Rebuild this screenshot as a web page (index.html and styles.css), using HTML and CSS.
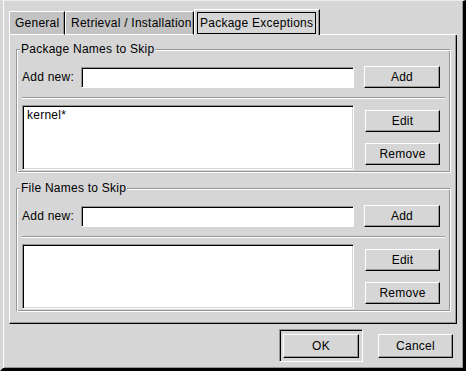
FILE: index.html
```html
<!DOCTYPE html>
<html lang="en">
<head>
    <meta charset="UTF-8">
    <title>Package Exceptions</title>
    <link rel="stylesheet" href="styles.css">
</head>
<body>

    <div class="window">
        <div class="notebook">
            <div class="tabs">
                <div class="tab tab-general">General</div>
                <div class="tab tab-retrieval">Retrieval / Installation</div>
                <div class="tab tab-exceptions active"><span class="focus">Package Exceptions</span></div>
                <div class="tab-fill"></div>
            </div>

            <div class="page">
                <fieldset class="frame">
                    <legend>Package Names to Skip</legend>
                    <div class="add-row">
                        <label>Add new:</label>
                        <div class="entry"></div>
                        <button class="btn">Add</button>
                    </div>
                    <div class="separator"></div>
                    <div class="list-row">
                        <div class="list">
                            <div class="item">kernel*</div>
                        </div>
                        <div class="list-buttons">
                            <button class="btn">Edit</button>
                            <button class="btn">Remove</button>
                        </div>
                    </div>
                </fieldset>

                <fieldset class="frame">
                    <legend>File Names to Skip</legend>
                    <div class="add-row">
                        <label>Add new:</label>
                        <div class="entry"></div>
                        <button class="btn">Add</button>
                    </div>
                    <div class="separator"></div>
                    <div class="list-row">
                        <div class="list"></div>
                        <div class="list-buttons">
                            <button class="btn">Edit</button>
                            <button class="btn">Remove</button>
                        </div>
                    </div>
                </fieldset>
            </div>
        </div>

        <div class="actions">
            <div class="default-frame">
                <button class="btn dialog-btn">OK</button>
            </div>
            <button class="btn dialog-btn cancel">Cancel</button>
        </div>
    </div>

</body>
</html>
```

FILE: styles.css
```css
body {
    margin: 0;
    background-color: #d6d6d6;
    color: #000;
    font-family: 'Liberation Sans', Arial, sans-serif;
    font-size: 12px;
    letter-spacing: 0.25px;
}

.window {
    width: 466px;
    height: 371px;
    box-sizing: border-box;
    border-style: solid;
    border-width: 1px 3px 3px 3px;
    border-color: #ececec #000 #000 #d6d6d6;
    box-shadow: inset 1px 0 #fff, inset -1px -1px #969696;
    padding: 8px 6px 0 6px;
    display: flex;
    flex-direction: column;
}

/* notebook */

.tabs {
    display: flex;
    align-items: flex-end;
    height: 26px;
}

.tab {
    height: 24px;
    box-sizing: border-box;
    padding: 0 0 0 5px;
    display: flex;
    align-items: center;
    background-color: #c3c3c3;
    border-top: 1px solid #fff;
    border-left: 1px solid #fff;
    border-right: 1px solid #000;
    border-bottom: 1px solid #fff;
    box-shadow: inset -1px 0 #969696;
    white-space: nowrap;
}

.tab-general {
    width: 56px;
}

.tab-retrieval {
    width: 129px;
}

.tab-exceptions {
    width: 126px;
}

.tab.active {
    height: 26px;
    padding: 2px 3px 1px 2px;
    align-items: stretch;
    background-color: #d6d6d6;
    border-bottom: none;
}

.focus {
    flex: 1;
    border: 1px solid #000;
    padding: 0 2px;
    display: flex;
    align-items: center;
}

.tab-fill {
    flex: 1;
    height: 0;
    border-bottom: 1px solid #fff;
}

.page {
    height: 289px;
    box-sizing: border-box;
    border-left: 1px solid #fff;
    border-right: 1px solid #000;
    border-bottom: 1px solid #000;
    box-shadow: inset -1px -1px #969696;
    padding: 7px 5px 6px 6px;
}

/* frames */

.frame {
    margin: 0;
    min-width: 0;
    border: 1px solid;
    border-color: #969696 #fff #fff #969696;
    box-shadow: inset 1px 1px #fff, inset -1px -1px #969696;
    padding: 10px 5px 2px 5px;
}

.frame + .frame {
    margin-top: 8px;
}

.frame legend {
    padding: 0 1px;
    margin-left: -2px;
    line-height: 14px;
    background-color: #d6d6d6;
}

.add-row {
    display: flex;
    align-items: center;
    height: 22px;
    margin-right: 5px;
}

.add-row label {
    width: 59px;
}

.entry {
    flex: 1;
    height: 21px;
    box-sizing: border-box;
    background-color: #fff;
    border: 1px solid;
    border-color: #969696 #fff #fff #969696;
    box-shadow: inset 1px 1px #000;
}

.add-row .btn {
    margin-left: 10px;
}

.separator {
    height: 0;
    border-top: 1px solid #969696;
    border-bottom: 1px solid #fff;
    margin: 9px 0 6px 0;
}

.list-row {
    display: flex;
    margin-right: 5px;
}

.list {
    flex: 1;
    height: 65px;
    box-sizing: border-box;
    background-color: #fff;
    border: 1px solid;
    border-color: #969696 #fff #fff #969696;
    box-shadow: inset 1px 1px #000, inset -1px -1px #d6d6d6;
    padding: 2px 4px;
}

.list-buttons {
    width: 76px;
    margin-left: 10px;
    display: flex;
    flex-direction: column;
    align-items: flex-end;
}

.list-buttons .btn {
    width: 75px;
    margin-top: 5px;
}

.list-buttons .btn + .btn {
    margin-top: 11px;
}

/* buttons */

.btn {
    width: 76px;
    height: 22px;
    box-sizing: border-box;
    margin: 0;
    padding: 0;
    font-family: 'Liberation Sans', Arial, sans-serif;
    font-size: 12px;
    letter-spacing: 0.25px;
    color: #000;
    background-color: #d6d6d6;
    border: 1px solid;
    border-color: #fff #000 #000 #fff;
    box-shadow: inset -1px -1px #969696;
}

.actions {
    display: flex;
    justify-content: flex-end;
    align-items: flex-start;
    padding: 5px 4px 0 0;
}

.default-frame {
    border: 1px solid;
    border-color: #969696 #fff #fff #969696;
    box-shadow: inset 1px 1px #000;
    padding: 4px 3px 3px 3px;
}

.dialog-btn {
    height: 24px;
}

.cancel {
    width: 75px;
    margin: 5px 0 0 15px;
}
```
